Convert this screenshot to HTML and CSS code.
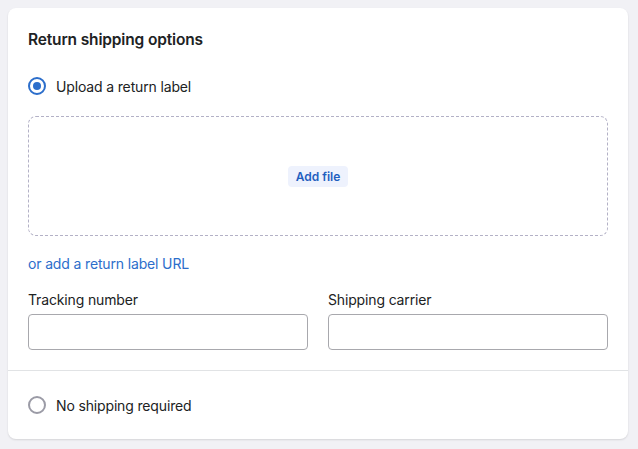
FILE: index.html
```html
<!DOCTYPE html>
<html>
<head>
    <title>Return shipping options</title>
    <link rel="stylesheet" href="styles.css">
</head>
<body>
    <div class="card">
        <div class="card-section">
            <h2 class="card-title">Return shipping options</h2>

            <label class="radio">
                <span class="radio-circle checked"></span>
                <span class="radio-label">Upload a return label</span>
            </label>

            <div class="dropzone">
                <button class="add-file">Add file</button>
            </div>

            <a class="link" href="#">or add a return label URL</a>

            <div class="field-row">
                <div class="field">
                    <label class="field-label">Tracking number</label>
                    <input type="text" class="text-input">
                </div>
                <div class="field">
                    <label class="field-label">Shipping carrier</label>
                    <input type="text" class="text-input">
                </div>
            </div>
        </div>

        <div class="card-section bottom">
            <label class="radio">
                <span class="radio-circle"></span>
                <span class="radio-label">No shipping required</span>
            </label>
        </div>
    </div>
</body>
</html>
```

FILE: styles.css
```css
body {
    font-family: Inter, "Noto Sans", sans-serif;
    margin: 0;
    padding: 8px;
    background-color: #f1f1f5;
    color: #202223;
    font-size: 14px;
    letter-spacing: -0.15px;
}

.card {
    width: 620px;
    background: white;
    border-radius: 8px;
    box-shadow: 0 1px 2px rgba(0,0,0,0.12);
}

.card-section {
    padding: 20px 20px 20px 20px;
}

.card-section.bottom {
    border-top: 1px solid #e1e3e5;
    padding: 24px 20px 24px 20px;
}

.card-title {
    margin: 0 0 24px 0;
    font-size: 15.5px;
    font-weight: 600;
    line-height: 24px;
}

.radio {
    display: flex;
    align-items: center;
    gap: 10px;
    height: 20px;
}

.radio-circle {
    box-sizing: border-box;
    width: 18px;
    height: 18px;
    border: 2px solid #9b9ba6;
    border-radius: 50%;
    display: flex;
    align-items: center;
    justify-content: center;
}

.radio-circle.checked {
    border-color: #2c6ecb;
}

.radio-circle.checked::after {
    content: "";
    width: 8px;
    height: 8px;
    border-radius: 50%;
    background: #2c6ecb;
}

.dropzone {
    margin-top: 20px;
    height: 120px;
    box-sizing: border-box;
    border: 1px dashed #b3b1c6;
    border-radius: 8px;
    display: flex;
    align-items: center;
    justify-content: center;
}

.add-file {
    font-family: inherit;
    font-size: 12px;
    font-weight: 600;
    color: #1f5fbf;
    background: #eef2fd;
    border: none;
    border-radius: 4px;
    padding: 3px 8px;
}

.link {
    display: block;
    margin-top: 18px;
    color: #2c6ecb;
    text-decoration: none;
    line-height: 20px;
}

.field-row {
    display: flex;
    gap: 20px;
    margin-top: 16px;
}

.field {
    flex: 1;
}

.field-label {
    display: block;
    line-height: 20px;
    margin-bottom: 4px;
}

.text-input {
    box-sizing: border-box;
    width: 100%;
    height: 36px;
    border: 1px solid #a8a8ad;
    border-radius: 4px;
    font-family: inherit;
    font-size: 14px;
}
```
